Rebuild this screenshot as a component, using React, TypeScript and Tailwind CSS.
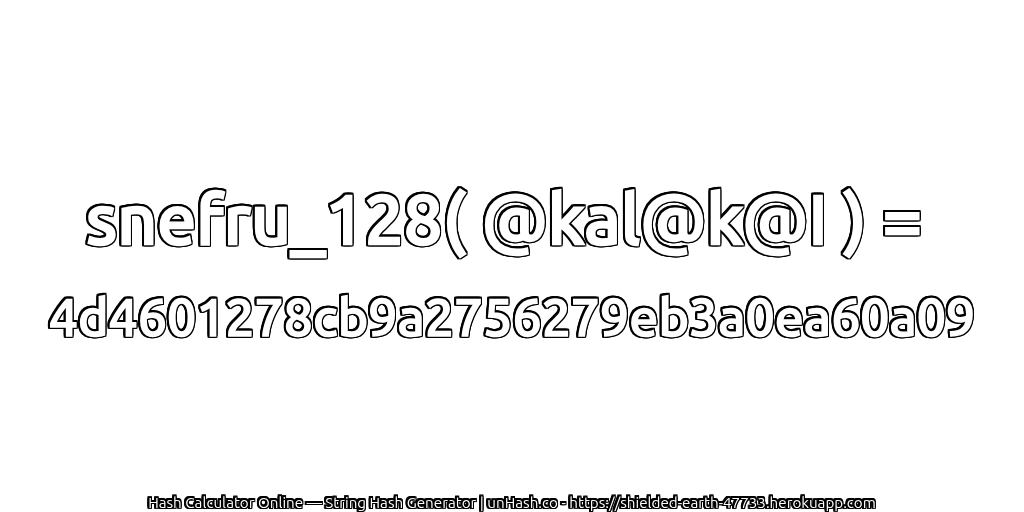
export default function App() {
  return (
    <div className="w-[1024px] h-[512px] bg-white flex flex-col items-center overflow-hidden font-['Ubuntu','Noto_Sans','DejaVu_Sans',sans-serif] text-white">
      <div className="mt-[176px] text-[69.4px] font-medium leading-[84px] whitespace-pre [-webkit-text-stroke:2.5px_#fff] [filter:drop-shadow(1.5px_0_0_#000)_drop-shadow(-1.5px_0_0_#000)_drop-shadow(0_1.5px_0_#000)_drop-shadow(0_-1.5px_0_#000)]">{"snefru_128( @kal@k@I ) = "}</div>
      <div className="mt-[26px] text-[51.8px] font-medium leading-[62px] whitespace-nowrap [-webkit-text-stroke:1.5px_#fff] [filter:drop-shadow(1.2px_0_0_#000)_drop-shadow(-1.2px_0_0_#000)_drop-shadow(0_1.2px_0_#000)_drop-shadow(0_-1.2px_0_#000)]">4d4601278cb9a2756279eb3a0ea60a09</div>
      <div className="mt-auto text-[15.2px] leading-[18px] whitespace-nowrap [filter:drop-shadow(1.3px_0_0_#000)_drop-shadow(-1.3px_0_0_#000)_drop-shadow(0_1.3px_0_#000)_drop-shadow(0_-1.3px_0_#000)]">Hash Calculator Online — String Hash Generator | unHash.co - https://shielded-earth-47733.herokuapp.com</div>
    </div>
  );
}
